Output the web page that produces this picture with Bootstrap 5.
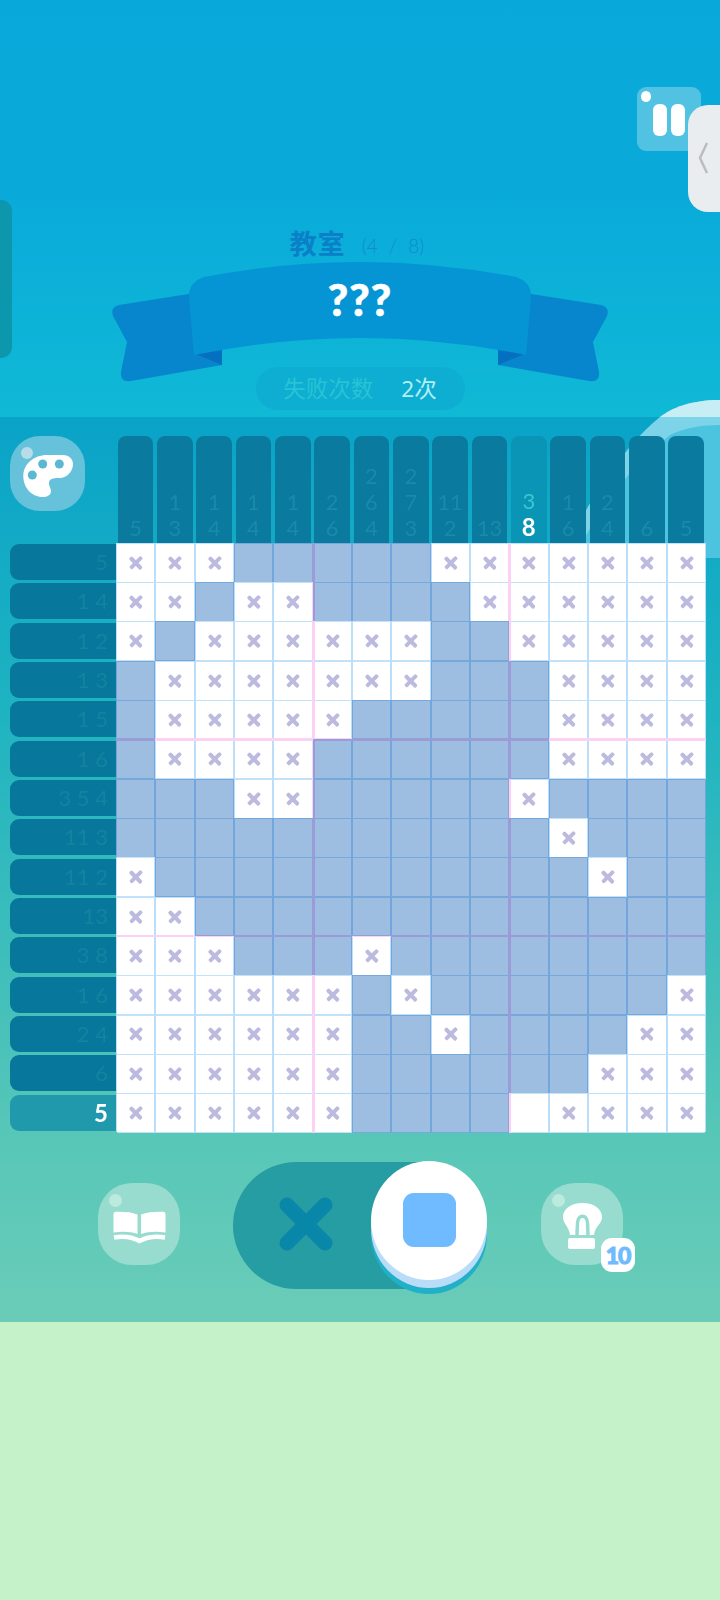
<!DOCTYPE html>
<html lang="zh-CN">
<head>
<meta charset="utf-8">
<title>教室</title>
<link href="https://cdn.jsdelivr.net/npm/bootstrap@5.3.0/dist/css/bootstrap.min.css" rel="stylesheet">
<style>
html,body{width:720px;height:1600px;margin:0;overflow:hidden;background:#c5f2c9;}
.game{width:720px;height:1600px;font-family:"Noto Sans","Noto Sans CJK SC",sans-serif;}
.sky{height:417px;padding-top:87px;background:linear-gradient(180deg,#09a8da 0%,#09aada 45%,#10b9d5 100%);}
.pause-btn{width:64px;height:64px;margin-right:19px;padding-top:2px;border-radius:9px;background:#52c2e2;gap:4px;}
.pause-bar{width:14px;height:32px;border-radius:6px;background:#fff;}
.gloss{position:absolute;border-radius:50%;background:#fff;}
.pause-btn .gloss{left:4px;top:4px;width:10px;height:11px;}
.side-tab{position:absolute;right:0;top:105px;width:32px;height:107px;background:#e9edef;border-radius:20px 0 0 20px;z-index:3;}
.side-tab svg{position:absolute;left:0;top:0;}
.left-tab{position:absolute;left:0;top:200px;width:12px;height:158px;background:#0d97ac;border-radius:0 11px 11px 0;}
.title-line{margin-top:73px;height:37px;color:#0a80c8;line-height:37px;}
.title-main{font:700 27px/37px "Noto Sans CJK SC",sans-serif;letter-spacing:1px;margin-left:-6px;}
.title-sub{font:300 19px/37px "Lato",sans-serif;color:#1289c8;margin-left:16px;margin-top:3px;word-spacing:6px;}
.ribbon-wrap{display:grid;height:125px;margin-top:-1px;}
.ribbon-wrap>*{grid-area:1/1;}
.ribbon-text{font:900 44px/50px "Lato",sans-serif;color:#fff;text-align:center;padding-top:14px;letter-spacing:1px;-webkit-text-stroke:.6px #fff;}
.fail-pill{width:209px;height:43px;margin-top:-18px;border-radius:22px;background:#0eaed2;font-size:22.5px;line-height:43px;}
.fail-label{color:#29c3d5;}
.fail-val{color:#b6eef3;margin-left:28px;}
.panel{height:905px;padding:19px 14px 0 9.5px;background:linear-gradient(180deg,#09a3c8 0%,#1eb3c1 32%,#45c0ba 65%,#58c7b8 80%,#6accb8 100%);}
.cloud{position:absolute;left:0;top:-17px;}
.board{position:relative;z-index:1;display:grid;grid-template-columns:106.5px 590px;}
.palette-btn{width:75px;height:75px;border-radius:30px;background:#66c2da;}
.palette-btn .gloss{left:11px;top:11px;width:12px;height:12px;background:#b6dde8;}
.heads{display:grid;grid-template-columns:repeat(15,39.333px);height:106.7px;}
.head-cell{margin:0 2px 0 1.7px;background:#0a7a9e;border-radius:8px 8px 0 0;color:#1a8aaa;font:400 22px/26px "Lato",sans-serif;text-align:center;padding-bottom:2px;}
.head-now{background:#0a95b7;color:#3cc6cf;}
.head-now b{color:#fff;font-weight:700;font-size:24px;}
.labels{display:grid;grid-auto-rows:39.333px;}
.row-label{height:36px;margin-top:1.3px;background:#07789c;border-radius:9px 0 0 9px;color:#13839f;font:400 22px/36px "Lato",sans-serif;text-align:right;padding-right:8px;}
.row-now{background:#2099ac;color:#fff;font-weight:700;font-size:24px;}
.field-wrap{position:relative;width:590px;height:590px;border-radius:0 0 4px 4px;overflow:hidden;}
.field{display:grid;grid-template-columns:repeat(15,39.333px);grid-auto-rows:39.333px;}
.field>span{display:grid;place-items:center;}
.o,.m{background:#fff;}
.f{background:#9dbee0;}
.m::before,.m::after{content:"";grid-area:1/1;width:15.5px;height:3.6px;border-radius:1.5px;background:#bdbadf;transform:rotate(45deg);}
.m::after{transform:rotate(-45deg);}
.field-lines{position:absolute;inset:0;pointer-events:none;mix-blend-mode:multiply;background:
 linear-gradient(90deg,transparent 196.3px,#fbd2f6 196.3px 199.3px,transparent 199.3px),
 linear-gradient(90deg,transparent 392.3px,#fbd2f6 392.3px 395.3px,transparent 395.3px),
 linear-gradient(180deg,transparent 195.3px,#fbd2f6 195.3px 197.8px,transparent 197.8px),
 linear-gradient(180deg,transparent 392px,#fbd2f6 392px 394.5px,transparent 394.5px),
 repeating-linear-gradient(90deg,#bbdffb 0 1px,transparent 1px 38.333px,#bbdffb 38.333px 39.333px),
 repeating-linear-gradient(180deg,#c2e2fa 0 .8px,transparent .8px 38.53px,#c2e2fa 38.53px 39.333px);}
.controls{position:relative;z-index:1;height:189px;margin-left:-9.5px;}
.round-btn{width:82px;height:82px;border-radius:34px;background:#97dccf;flex-shrink:0;}
.round-btn .gloss{left:11px;top:11px;width:13px;height:13px;background:#bdeade;}
.book-btn{position:relative;margin:50px 0 0 98px;}
.track{width:250px;height:127px;margin:29px 0 0 53px;border-radius:64px;background:#269ca3;flex-shrink:0;}
.track>svg{margin:34px 0 0 44.5px;flex-shrink:0;}
.knob{width:116px;height:119px;margin:-1px 0 0 37.5px;border-radius:50%;background:#fff;box-shadow:0 8px 0 #b9dcf8,0 14px 0 #22b0c8;z-index:1;flex-shrink:0;}
.knob-square{width:53px;height:54px;border-radius:11px;background:#70baff;}
.bulb-btn{position:relative;margin:50px 0 0 58px;}
.hint-count{position:absolute;left:60px;top:55px;width:34px;height:34px;border-radius:11px;background:#fff;color:#70baff;font:900 23px/34px "Lato",sans-serif;text-align:center;letter-spacing:-1px;-webkit-text-stroke:1px #70baff;}
.ground{height:278px;background:#c5f2c9;}
</style>
</head>
<body>
<div class="game position-relative overflow-hidden">

<header class="sky position-relative">
  <div class="d-flex justify-content-end">
    <div class="pause-btn position-relative d-flex align-items-center justify-content-center">
      <span class="gloss"></span><span class="pause-bar"></span><span class="pause-bar"></span>
    </div>
  </div>
  <div class="title-line d-flex justify-content-center">
    <span class="title-main">教室</span><span class="title-sub">(4 / 8)</span>
  </div>
  <div class="ribbon-wrap">
    <svg width="720" height="125" viewBox="0 0 720 125" aria-hidden="true">
      <path d="M195 33L119 45Q110 47 113 56L127 82L121 112Q120 123 131 121L222 105V80Z" fill="#0786cd"/>
      <path d="M525 33L601 45Q610 47 607 56L593 82L599 112Q600 123 589 121L498 105V80Z" fill="#0786cd"/>
      <path d="M193 93L222 88V105Z" fill="#0570c0"/>
      <path d="M527 93L498 88V105Z" fill="#0570c0"/>
      <path d="M204 17Q360 -13 516 17Q531 22 531 36L526 95Q360 61 194 95L189 36Q189 22 204 17Z" fill="#0595d5"/>
    </svg>
    <div class="ribbon-text">???</div>
  </div>
  <div class="fail-pill mx-auto text-center"><span class="fail-label">失败次数</span><span class="fail-val">2次</span></div>
  <div class="left-tab"></div>
  <div class="side-tab">
    <svg width="32" height="107" viewBox="0 0 32 107" aria-hidden="true"><path d="M19 38L12 53L19 68" fill="none" stroke="#bcbcbc" stroke-width="2.5"/></svg>
  </div>
</header>

<main class="panel position-relative">
  <svg class="cloud" width="720" height="160" viewBox="0 0 720 160" aria-hidden="true">
    <path d="M720 0C690 0 672 8 660 17C640 33 605 70 570 140V158H720Z" fill="#7dd4e8"/>
    <path d="M720 0C690 0 672 8 660 17H720Z" fill="#c8eef5"/>
    <path d="M720 25C700 25 685 28 670 35C640 60 600 100 575 158H720Z" fill="#4cc4e0"/>
  </svg>
  <div class="board">
    <div>
      <div class="palette-btn position-relative">
        <span class="gloss"></span>
        <svg width="75" height="75" viewBox="0 0 75 75" aria-hidden="true" class="d-block">
          <path d="M13.3 40C13.3 28 24 19 37 19H53C59 19 63 23 63 28C63 36 56 42 50 42C45 42 40 42 39 46C38.5 50 41 52 41 55C41 59 37 61 33 61C21 61 13.3 51 13.3 40Z" fill="#fff"/>
          <circle cx="32.7" cy="28" r="4.5" fill="#5ab8d3"/><circle cx="49.3" cy="28" r="4.5" fill="#5ab8d3"/><circle cx="22.3" cy="39" r="4.5" fill="#5ab8d3"/>
        </svg>
      </div>
    </div>
    <div class="heads">
      <div class="head-cell d-flex flex-column justify-content-end"><div>5</div></div>
      <div class="head-cell d-flex flex-column justify-content-end"><div>1</div><div>3</div></div>
      <div class="head-cell d-flex flex-column justify-content-end"><div>1</div><div>4</div></div>
      <div class="head-cell d-flex flex-column justify-content-end"><div>1</div><div>4</div></div>
      <div class="head-cell d-flex flex-column justify-content-end"><div>1</div><div>4</div></div>
      <div class="head-cell d-flex flex-column justify-content-end"><div>2</div><div>6</div></div>
      <div class="head-cell d-flex flex-column justify-content-end"><div>2</div><div>6</div><div>4</div></div>
      <div class="head-cell d-flex flex-column justify-content-end"><div>2</div><div>7</div><div>3</div></div>
      <div class="head-cell d-flex flex-column justify-content-end"><div>11</div><div>2</div></div>
      <div class="head-cell d-flex flex-column justify-content-end"><div>13</div></div>
      <div class="head-cell head-now d-flex flex-column justify-content-end"><div>3</div><div><b>8</b></div></div>
      <div class="head-cell d-flex flex-column justify-content-end"><div>1</div><div>6</div></div>
      <div class="head-cell d-flex flex-column justify-content-end"><div>2</div><div>4</div></div>
      <div class="head-cell d-flex flex-column justify-content-end"><div>6</div></div>
      <div class="head-cell d-flex flex-column justify-content-end"><div>5</div></div>
    </div>
    <div class="labels">
      <div class="row-label">5</div>
      <div class="row-label">1 4</div>
      <div class="row-label">1 2</div>
      <div class="row-label">1 3</div>
      <div class="row-label">1 5</div>
      <div class="row-label">1 6</div>
      <div class="row-label">3 5 4</div>
      <div class="row-label">11 3</div>
      <div class="row-label">11 2</div>
      <div class="row-label">13</div>
      <div class="row-label">3 8</div>
      <div class="row-label">1 6</div>
      <div class="row-label">2 4</div>
      <div class="row-label">6</div>
      <div class="row-label row-now">5</div>
    </div>
    <div class="field-wrap">
      <div class="field">
<span class="m"></span><span class="m"></span><span class="m"></span><span class="f"></span><span class="f"></span><span class="f"></span><span class="f"></span><span class="f"></span><span class="m"></span><span class="m"></span><span class="m"></span><span class="m"></span><span class="m"></span><span class="m"></span><span class="m"></span>
<span class="m"></span><span class="m"></span><span class="f"></span><span class="m"></span><span class="m"></span><span class="f"></span><span class="f"></span><span class="f"></span><span class="f"></span><span class="m"></span><span class="m"></span><span class="m"></span><span class="m"></span><span class="m"></span><span class="m"></span>
<span class="m"></span><span class="f"></span><span class="m"></span><span class="m"></span><span class="m"></span><span class="m"></span><span class="m"></span><span class="m"></span><span class="f"></span><span class="f"></span><span class="m"></span><span class="m"></span><span class="m"></span><span class="m"></span><span class="m"></span>
<span class="f"></span><span class="m"></span><span class="m"></span><span class="m"></span><span class="m"></span><span class="m"></span><span class="m"></span><span class="m"></span><span class="f"></span><span class="f"></span><span class="f"></span><span class="m"></span><span class="m"></span><span class="m"></span><span class="m"></span>
<span class="f"></span><span class="m"></span><span class="m"></span><span class="m"></span><span class="m"></span><span class="m"></span><span class="f"></span><span class="f"></span><span class="f"></span><span class="f"></span><span class="f"></span><span class="m"></span><span class="m"></span><span class="m"></span><span class="m"></span>
<span class="f"></span><span class="m"></span><span class="m"></span><span class="m"></span><span class="m"></span><span class="f"></span><span class="f"></span><span class="f"></span><span class="f"></span><span class="f"></span><span class="f"></span><span class="m"></span><span class="m"></span><span class="m"></span><span class="m"></span>
<span class="f"></span><span class="f"></span><span class="f"></span><span class="m"></span><span class="m"></span><span class="f"></span><span class="f"></span><span class="f"></span><span class="f"></span><span class="f"></span><span class="m"></span><span class="f"></span><span class="f"></span><span class="f"></span><span class="f"></span>
<span class="f"></span><span class="f"></span><span class="f"></span><span class="f"></span><span class="f"></span><span class="f"></span><span class="f"></span><span class="f"></span><span class="f"></span><span class="f"></span><span class="f"></span><span class="m"></span><span class="f"></span><span class="f"></span><span class="f"></span>
<span class="m"></span><span class="f"></span><span class="f"></span><span class="f"></span><span class="f"></span><span class="f"></span><span class="f"></span><span class="f"></span><span class="f"></span><span class="f"></span><span class="f"></span><span class="f"></span><span class="m"></span><span class="f"></span><span class="f"></span>
<span class="m"></span><span class="m"></span><span class="f"></span><span class="f"></span><span class="f"></span><span class="f"></span><span class="f"></span><span class="f"></span><span class="f"></span><span class="f"></span><span class="f"></span><span class="f"></span><span class="f"></span><span class="f"></span><span class="f"></span>
<span class="m"></span><span class="m"></span><span class="m"></span><span class="f"></span><span class="f"></span><span class="f"></span><span class="m"></span><span class="f"></span><span class="f"></span><span class="f"></span><span class="f"></span><span class="f"></span><span class="f"></span><span class="f"></span><span class="f"></span>
<span class="m"></span><span class="m"></span><span class="m"></span><span class="m"></span><span class="m"></span><span class="m"></span><span class="f"></span><span class="m"></span><span class="f"></span><span class="f"></span><span class="f"></span><span class="f"></span><span class="f"></span><span class="f"></span><span class="m"></span>
<span class="m"></span><span class="m"></span><span class="m"></span><span class="m"></span><span class="m"></span><span class="m"></span><span class="f"></span><span class="f"></span><span class="m"></span><span class="f"></span><span class="f"></span><span class="f"></span><span class="f"></span><span class="m"></span><span class="m"></span>
<span class="m"></span><span class="m"></span><span class="m"></span><span class="m"></span><span class="m"></span><span class="m"></span><span class="f"></span><span class="f"></span><span class="f"></span><span class="f"></span><span class="f"></span><span class="f"></span><span class="m"></span><span class="m"></span><span class="m"></span>
<span class="m"></span><span class="m"></span><span class="m"></span><span class="m"></span><span class="m"></span><span class="m"></span><span class="f"></span><span class="f"></span><span class="f"></span><span class="f"></span><span class="o"></span><span class="m"></span><span class="m"></span><span class="m"></span><span class="m"></span>
      </div>
      <div class="field-lines"></div>
    </div>
  </div>
  <div class="controls d-flex align-items-start">
    <div class="round-btn book-btn">
      <span class="gloss"></span>
      <svg width="82" height="82" viewBox="0 0 82 82" aria-hidden="true" class="d-block">
        <path d="M15.5 31Q15.5 28.7 18 28.7C26 28.5 34 29 39.5 31.5V51C33 48.5 24 48.3 15.5 49.5Z" fill="#fff"/>
        <path d="M67.5 31Q67.5 28.7 65 28.7C57 28.5 49 29 43 31.5V51C50 48.5 59 48.3 67.5 49.5Z" fill="#fff"/>
        <path d="M16 54.5C25 53 34 54 41.5 58C49 54 58 53 67 54.5" fill="none" stroke="#fff" stroke-width="4.5"/>
      </svg>
    </div>
    <div class="track d-flex">
      <svg width="56" height="56" viewBox="0 0 56 56" aria-hidden="true"><path d="M9 9L47 47M47 9L9 47" stroke="#0987a8" stroke-width="15" stroke-linecap="round"/></svg>
      <div class="knob d-flex align-items-center justify-content-center"><div class="knob-square"></div></div>
    </div>
    <div class="round-btn bulb-btn">
      <span class="gloss"></span>
      <svg width="82" height="82" viewBox="0 0 82 82" aria-hidden="true" class="d-block">
        <path d="M41.5 20C53 20 61 26 61 34C61 41 54 43 53 52H29C28 43 22 41 22 34C22 26 30 20 41.5 20Z" fill="#fff"/>
        <path d="M36 52L36.5 40C37 31 46 31 46.5 40L47 52" fill="none" stroke="#97dccf" stroke-width="3.5"/>
        <rect x="27" y="55" width="27" height="11" rx="2" fill="#fff"/>
      </svg>
      <div class="hint-count">10</div>
    </div>
  </div>
</main>

<footer class="ground"></footer>
</div>
<script src="https://cdn.jsdelivr.net/npm/bootstrap@5.3.0/dist/js/bootstrap.bundle.min.js"></script>
</body>
</html>
